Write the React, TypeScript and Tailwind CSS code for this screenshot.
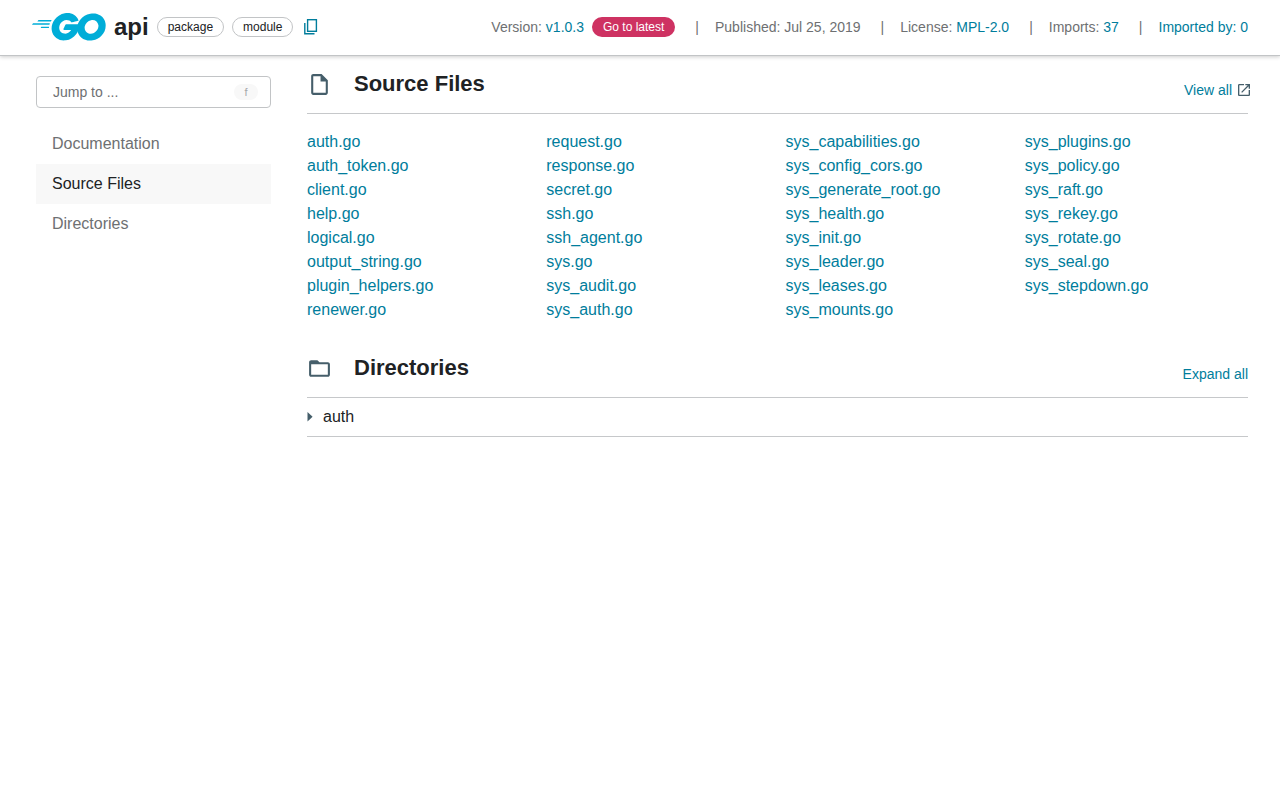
import { Fragment, type ReactNode } from "react";

const files = [
  "auth.go", "auth_token.go", "client.go", "help.go", "logical.go", "output_string.go", "plugin_helpers.go", "renewer.go",
  "request.go", "response.go", "secret.go", "ssh.go", "ssh_agent.go", "sys.go", "sys_audit.go", "sys_auth.go",
  "sys_capabilities.go", "sys_config_cors.go", "sys_generate_root.go", "sys_health.go", "sys_init.go", "sys_leader.go", "sys_leases.go", "sys_mounts.go",
  "sys_plugins.go", "sys_policy.go", "sys_raft.go", "sys_rekey.go", "sys_rotate.go", "sys_seal.go", "sys_stepdown.go",
];

const navItems = [
  { label: "Documentation", href: "#documentation", active: false },
  { label: "Source Files", href: "#source-files", active: true },
  { label: "Directories", href: "#directories", active: false },
];

function GoLogo() {
  return (
    <svg className="h-7 w-[74px]" viewBox="24.5 78 206.5 77.5" fill="#00add8" aria-hidden="true">
      <path d="M40.2,101.1c-0.4,0-0.5-0.2-0.3-0.5l2.1-2.7c0.2-0.3,0.7-0.5,1.1-0.5l35.7,0c0.4,0,0.5,0.3,0.3,0.6l-1.7,2.6c-0.2,0.3-0.7,0.6-1,0.6L40.2,101.1z" />
      <path d="M25.1,110.3c-0.4,0-0.5-0.2-0.3-0.5l2.1-2.7c0.2-0.3,0.7-0.5,1.1-0.5l45.6,0c0.4,0,0.6,0.3,0.5,0.6l-0.8,2.4c-0.1,0.4-0.5,0.6-0.9,0.6L25.1,110.3z" />
      <path d="M49.3,119.5c-0.4,0-0.5-0.3-0.3-0.6l1.4-2.5c0.2-0.3,0.6-0.6,1-0.6l20,0c0.4,0,0.6,0.3,0.6,0.7l-0.2,2.4c0,0.4-0.4,0.7-0.7,0.7L49.3,119.5z" />
      <path d="M153.1,99.3c-6.3,1.6-10.6,2.8-16.8,4.4c-1.5,0.4-1.6,0.5-2.9-1c-1.5-1.7-2.6-2.8-4.7-3.8c-6.3-3.1-12.4-2.2-18.1,1.5c-6.8,4.4-10.3,10.9-10.2,19c0.1,8,5.6,14.6,13.5,15.7c6.8,0.9,12.5-1.5,17-6.6c0.9-1.1,1.7-2.3,2.7-3.7c-3.6,0-8.1,0-19.3,0c-2.1,0-2.6-1.3-1.9-3c1.3-3.1,3.7-8.3,5.1-10.9c0.3-0.6,1-1.6,2.5-1.6c5.1,0,23.9,0,36.4,0c-0.2,2.7-0.2,5.4-0.6,8.1c-1.1,7.2-3.8,13.8-8.2,19.6c-7.2,9.5-16.6,15.4-28.5,17c-9.8,1.3-18.9-0.6-26.9-6.6c-7.4-5.6-11.6-13-12.7-22.2c-1.3-10.9,1.9-20.7,8.5-29.3c7.1-9.3,16.5-15.2,28-17.3c9.4-1.7,18.4-0.6,26.5,4.9c5.3,3.5,9.1,8.3,11.6,14.1C154.7,98.5,154.3,99,153.1,99.3z" />
      <path d="M186.2,154.6c-9.1-0.2-17.4-2.8-24.4-8.8c-5.9-5.1-9.6-11.6-10.8-19.3c-1.8-11.3,1.3-21.3,8.1-30.2c7.3-9.6,16.1-14.6,28-16.7c10.2-1.8,19.8-0.8,28.5,5.1c7.9,5.4,12.8,12.7,14.1,22.3c1.7,13.5-2.2,24.5-11.5,33.9c-6.6,6.7-14.7,10.9-24,12.8C191.5,154.2,188.8,154.3,186.2,154.6z M210,114.2c-0.1-1.3-0.1-2.3-0.3-3.3c-1.8-9.9-10.9-15.5-20.4-13.3c-9.3,2.1-15.3,8-17.5,17.4c-1.8,7.8,2,15.7,9.2,18.9c5.5,2.4,11,2.1,16.3-0.6C205.2,129.2,209.5,122.8,210,114.2z" />
    </svg>
  );
}

function Pill({ children }: { children: ReactNode }) {
  return (
    <span className="rounded-full border border-[#c2c4c6] px-2.5 text-xs leading-[18px]">{children}</span>
  );
}

function MetaLink({ children }: { children: ReactNode }) {
  return <a href="#meta" className="text-[#007d9c]">{children}</a>;
}

function SectionHeader({ icon, title, action }: { icon: string; title: string; action: ReactNode }) {
  return (
    <div className="flex items-end border-b border-[#c6c8ca] pt-3 pb-[13px]">
      <h2 className="flex flex-1 items-center gap-[22px] text-[22px] leading-8 font-bold">
        <svg className="size-[25px]" viewBox="0 0 24 24" fill="#455e6a" aria-hidden="true">
          <path d={icon} />
        </svg>
        {title}
      </h2>
      {action}
    </div>
  );
}

const fileIcon = "M14 2H6c-1.1 0-2 .9-2 2v16c0 1.1.9 2 2 2h12c1.1 0 2-.9 2-2V8l-6-6zM6 20V4h7v5h5v11H6z";
const folderIcon = "M20 6h-8l-2-2H4c-1.1 0-1.99.9-1.99 2L2 18c0 1.1.9 2 2 2h16c1.1 0 2-.9 2-2V8c0-1.1-.9-2-2-2zm0 12H4V8h16v10z";

export default function App() {
  const meta = [
    <span className="flex items-center gap-2">
      <span>Version: <MetaLink>v1.0.3</MetaLink></span>
      <a href="#latest" className="rounded-full bg-[#ce3262] px-[11px] text-xs leading-5 text-white">Go to latest</a>
    </span>,
    <span>Published: Jul 25, 2019</span>,
    <span>License: <MetaLink>MPL-2.0</MetaLink></span>,
    <span>Imports: <MetaLink>37</MetaLink></span>,
    <MetaLink>Imported by: 0</MetaLink>,
  ];

  return (
    <div className="min-h-screen bg-white font-['Liberation_Sans',Arial,sans-serif] text-base text-[#202224]">
      <header className="flex h-14 items-center justify-between border-b border-[#c2c4c6] px-8 pb-0.5 whitespace-nowrap shadow-[0_1px_4px_rgba(0,0,0,0.2)]">
        <div className="flex items-center gap-2">
          <a href="#home" aria-label="Go home"><GoLogo /></a>
          <h1 className="text-2xl leading-7 font-bold">api</h1>
          <Pill>package</Pill>
          <Pill>module</Pill>
          <button type="button" aria-label="Copy path" className="pl-[3px]">
            <svg width="14" height="16" viewBox="0 0 14 16" fill="none" stroke="#007d9c" aria-hidden="true">
              <rect x="3.6" y="0.7" width="8.8" height="11.6" strokeWidth="1.4" />
              <path d="M0.8 4V14.8H10.5" strokeWidth="1.4" />
            </svg>
          </button>
        </div>
        <div className="flex items-center text-sm leading-5 text-[#6e7072]">
          {meta.map((item, i) => (
            <Fragment key={i}>
              {i > 0 && <span className="mr-4 ml-5">|</span>}
              {item}
            </Fragment>
          ))}
        </div>
      </header>

      <div className="flex gap-9 pr-8 pl-9">
        <aside className="w-[235px] shrink-0 pt-5">
          <div className="relative">
            <input
              type="text"
              aria-label="Jump to"
              placeholder="Jump to ..."
              className="block h-8 w-full rounded border border-[#c2c4c6] px-4 text-sm placeholder:text-[#6e7072]"
            />
            <kbd className="absolute top-2 right-[13px] w-6 rounded-full bg-[#f8f8f8] text-center font-['Liberation_Sans',Arial,sans-serif] text-[11px] leading-4 text-[#a5a7a9]">
              f
            </kbd>
          </div>
          <nav className="mt-4">
            {navItems.map((item) => (
              <a
                key={item.label}
                href={item.href}
                className={item.active ? "block bg-[#f8f8f8] px-4 leading-10" : "block px-4 leading-10 text-[#6e7072]"}
              >
                {item.label}
              </a>
            ))}
          </nav>
        </aside>

        <main className="min-w-0 flex-1">
          <section id="source-files">
            <SectionHeader
              icon={fileIcon}
              title="Source Files"
              action={
                <a href="#all-files" className="-mr-1 flex items-center gap-1 text-sm leading-5 text-[#007d9c]">
                  View all
                  <svg className="size-4" viewBox="0 0 24 24" fill="#455e6a" aria-hidden="true">
                    <path d="M19 19H5V5h7V3H5c-1.11 0-2 .9-2 2v14c0 1.1.89 2 2 2h14c1.1 0 2-.9 2-2v-7h-2v7zM14 3v2h3.59l-9.83 9.83 1.41 1.41L19 6.41V10h2V3h-7z" />
                  </svg>
                </a>
              }
            />
            <ul className="my-4 columns-4 gap-4">
              {files.map((name) => (
                <li key={name}>
                  <a href={`#${name}`} className="text-[#007d9c]">{name}</a>
                </li>
              ))}
            </ul>
          </section>

          <section id="directories" className="pt-0.5">
            <SectionHeader
              icon={folderIcon}
              title="Directories"
              action={<button type="button" className="text-sm leading-5 text-[#007d9c]">Expand all</button>}
            />
            <div className="border-b border-[#c6c8ca]">
              <button type="button" className="flex h-[38px] items-center gap-2.5">
                <svg width="6" height="12" viewBox="0 0 6 12" fill="#455e6a" aria-hidden="true">
                  <path d="M0.5 1L5.6 5.8L0.5 10.6Z" />
                </svg>
                auth
              </button>
            </div>
          </section>
        </main>
      </div>
    </div>
  );
}
